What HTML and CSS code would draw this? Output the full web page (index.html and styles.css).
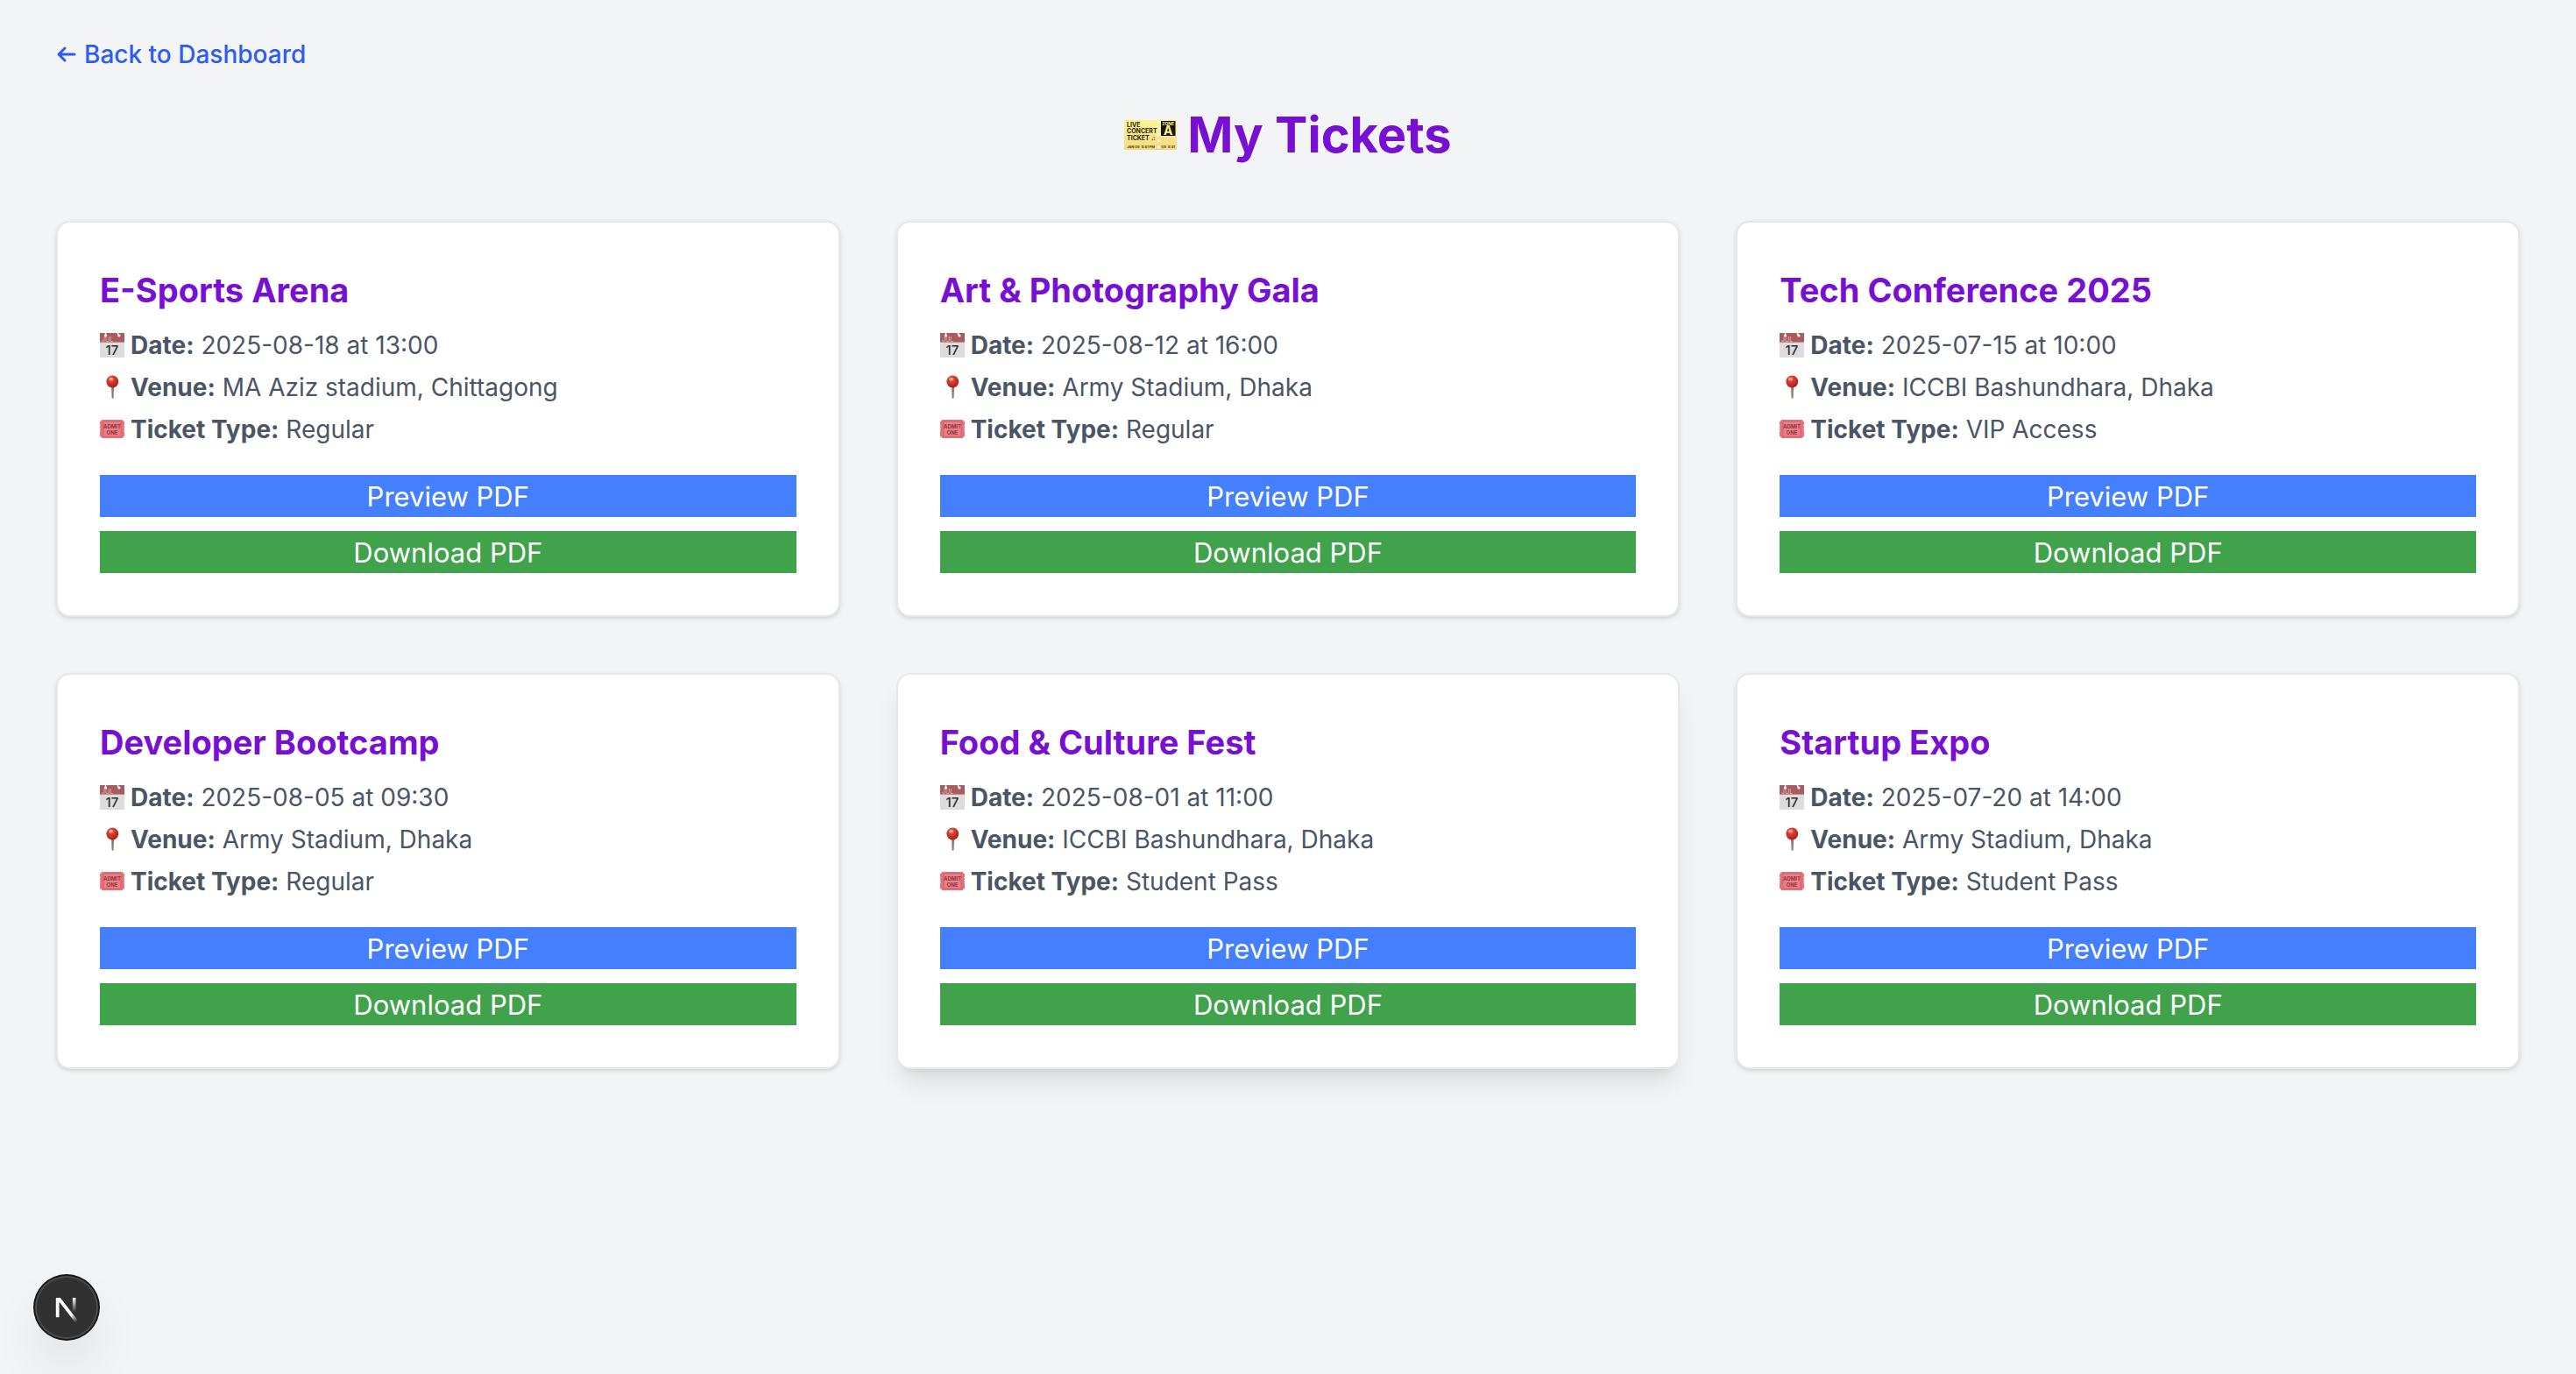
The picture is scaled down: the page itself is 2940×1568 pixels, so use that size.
FILE: index.html
```html
<!DOCTYPE html>
<html lang="en">
<head>
<meta charset="utf-8">
<meta name="viewport" content="width=device-width, initial-scale=1">
<title>My Tickets</title>
<link rel="stylesheet" href="styles.css">
</head>
<body>
<svg class="gradients" aria-hidden="true">
  <defs>
    <linearGradient id="pin-stem" x1="0" x2="1" y1="0" y2="0"><stop offset="0" stop-color="#a8927f"/><stop offset="1" stop-color="#6f6660"/></linearGradient>
    <radialGradient id="pin-head" cx=".4" cy=".3" r=".7"><stop offset="0" stop-color="#f58a78"/><stop offset=".35" stop-color="#d8402f"/><stop offset="1" stop-color="#a81f17"/></radialGradient>
    <linearGradient id="paper" x1="0" x2="0" y1="0" y2="1"><stop offset="0" stop-color="#fdf68f"/><stop offset="1" stop-color="#f3d982"/></linearGradient>
  </defs>
</svg>
<svg class="sprite" aria-hidden="true">
  <symbol id="calendar" viewBox="0 0 28 28">
    <rect width="28" height="28" fill="#dcdcdc"/>
    <rect width="28" height="11" fill="#a95c5e"/>
    <rect y="10" width="28" height="1" fill="#c38d8e"/>
    <circle cx="6.500" cy="3" r="1.600" fill="#fff"/><path d="M6.500 0V3M20 0l2 3" stroke="#fff" stroke-width="1.400"/>
    <circle cx="22" cy="3" r="1.600" fill="#fff"/>
    <text x="2" y="9.500" class="cal-month">JUL</text>
    <text x="14" y="25" class="cal-day">17</text>
  </symbol>
  <symbol id="pin" viewBox="0 0 28 28">
    <path d="M13 13h3l-.5 13-1 1-1-1z" fill="url(#pin-stem)"/>
    <circle cx="14.300" cy="7.500" r="6.900" fill="url(#pin-head)"/>
    <ellipse cx="12.500" cy="4.500" rx="2.500" ry="1.500" fill="#fbb6a8" opacity=".7"/>
  </symbol>
  <symbol id="admit" viewBox="0 0 28 28">
    <path d="M2 3h24q0 2 2 2v3.500q-1.200 1 0 2v1q-1.200 1 0 2v1q-1.200 1 0 2V22q-2 0-2 2H2q0-2-2-2v-5.500q1.200-1 0-2v-1q1.200-1 0-2v-1q1.200-1 0-2V5q2 0 2-2z" fill="#e8707a"/>
    <rect x="4" y="5" width="20" height="17" fill="#ec8087" stroke="#c95762" stroke-width=".7"/>
    <text x="14" y="12.800" class="admit-text">ADMIT</text>
    <text x="14" y="19.500" class="admit-text">ONE</text>
  </symbol>
</svg>

<main class="page">
  <nav class="nav"><a class="back" href="#"><svg class="arrow" viewBox="0 0 24 20" aria-hidden="true"><path d="M21 10H3M10 3l-7 7 7 7"/></svg>Back to Dashboard</a></nav>

  <h1 class="heading">
    <svg class="heading-icon" viewBox="0 0 60 34" aria-hidden="true">
      <rect width="60" height="34" fill="url(#paper)"/>
      <path d="M39.500 1v32" stroke="#f3f4f6" stroke-width="3" stroke-dasharray="3 4"/>
      <rect x="42" y="1" width="16.500" height="17" fill="#18160c"/>
      <text x="3" y="7.500" class="concert">LIVE</text>
      <text x="3" y="15" class="concert">CONCERT</text>
      <text x="3" y="22.700" class="concert">TICKET ♫</text>
      <text x="3" y="31.500" class="fine">JAN 09&#160; 9:41 PM</text>
      <text x="42" y="31.500" class="fine">1/9&#160; 9:41</text>
      <text x="50.200" y="6" class="zone">ZONE</text>
      <text x="50.200" y="17" class="zone-letter">A</text>
    </svg>
    My Tickets
  </h1>

  <section class="grid">
    <article class="card">
      <h2 class="title">E-Sports Arena</h2>
      <div class="details">
        <p class="row"><svg class="icon" aria-hidden="true"><use href="#calendar"/></svg><span><strong>Date:</strong> 2025-08-18 at 13:00</span></p>
        <p class="row"><svg class="icon" aria-hidden="true"><use href="#pin"/></svg><span><strong>Venue:</strong> MA Aziz stadium, Chittagong</span></p>
        <p class="row"><svg class="icon" aria-hidden="true"><use href="#admit"/></svg><span><strong>Ticket Type:</strong> Regular</span></p>
      </div>
      <div class="actions"><button class="btn preview" type="button">Preview PDF</button><button class="btn download" type="button">Download PDF</button></div>
    </article>
    <article class="card">
      <h2 class="title">Art &amp; Photography Gala</h2>
      <div class="details">
        <p class="row"><svg class="icon" aria-hidden="true"><use href="#calendar"/></svg><span><strong>Date:</strong> 2025-08-12 at 16:00</span></p>
        <p class="row"><svg class="icon" aria-hidden="true"><use href="#pin"/></svg><span><strong>Venue:</strong> Army Stadium, Dhaka</span></p>
        <p class="row"><svg class="icon" aria-hidden="true"><use href="#admit"/></svg><span><strong>Ticket Type:</strong> Regular</span></p>
      </div>
      <div class="actions"><button class="btn preview" type="button">Preview PDF</button><button class="btn download" type="button">Download PDF</button></div>
    </article>
    <article class="card">
      <h2 class="title">Tech Conference 2025</h2>
      <div class="details">
        <p class="row"><svg class="icon" aria-hidden="true"><use href="#calendar"/></svg><span><strong>Date:</strong> 2025-07-15 at 10:00</span></p>
        <p class="row"><svg class="icon" aria-hidden="true"><use href="#pin"/></svg><span><strong>Venue:</strong> ICCBI Bashundhara, Dhaka</span></p>
        <p class="row"><svg class="icon" aria-hidden="true"><use href="#admit"/></svg><span><strong>Ticket Type:</strong> VIP Access</span></p>
      </div>
      <div class="actions"><button class="btn preview" type="button">Preview PDF</button><button class="btn download" type="button">Download PDF</button></div>
    </article>
    <article class="card">
      <h2 class="title">Developer Bootcamp</h2>
      <div class="details">
        <p class="row"><svg class="icon" aria-hidden="true"><use href="#calendar"/></svg><span><strong>Date:</strong> 2025-08-05 at 09:30</span></p>
        <p class="row"><svg class="icon" aria-hidden="true"><use href="#pin"/></svg><span><strong>Venue:</strong> Army Stadium, Dhaka</span></p>
        <p class="row"><svg class="icon" aria-hidden="true"><use href="#admit"/></svg><span><strong>Ticket Type:</strong> Regular</span></p>
      </div>
      <div class="actions"><button class="btn preview" type="button">Preview PDF</button><button class="btn download" type="button">Download PDF</button></div>
    </article>
    <article class="card raised">
      <h2 class="title">Food &amp; Culture Fest</h2>
      <div class="details">
        <p class="row"><svg class="icon" aria-hidden="true"><use href="#calendar"/></svg><span><strong>Date:</strong> 2025-08-01 at 11:00</span></p>
        <p class="row"><svg class="icon" aria-hidden="true"><use href="#pin"/></svg><span><strong>Venue:</strong> ICCBI Bashundhara, Dhaka</span></p>
        <p class="row"><svg class="icon" aria-hidden="true"><use href="#admit"/></svg><span><strong>Ticket Type:</strong> Student Pass</span></p>
      </div>
      <div class="actions"><button class="btn preview" type="button">Preview PDF</button><button class="btn download" type="button">Download PDF</button></div>
    </article>
    <article class="card">
      <h2 class="title">Startup Expo</h2>
      <div class="details">
        <p class="row"><svg class="icon" aria-hidden="true"><use href="#calendar"/></svg><span><strong>Date:</strong> 2025-07-20 at 14:00</span></p>
        <p class="row"><svg class="icon" aria-hidden="true"><use href="#pin"/></svg><span><strong>Venue:</strong> Army Stadium, Dhaka</span></p>
        <p class="row"><svg class="icon" aria-hidden="true"><use href="#admit"/></svg><span><strong>Ticket Type:</strong> Student Pass</span></p>
      </div>
      <div class="actions"><button class="btn preview" type="button">Preview PDF</button><button class="btn download" type="button">Download PDF</button></div>
    </article>
  </section>
</main>

<button class="dev-badge" type="button" aria-label="Open Next.js Dev Tools">
  <svg class="dev-logo" viewBox="0 0 32 40" fill="none" aria-hidden="true">
    <defs>
      <linearGradient id="n-diag" x1="9.956" y1="11.123" x2="15.478" y2="17.967" gradientUnits="userSpaceOnUse"><stop stop-color="#fff"/><stop offset=".604" stop-color="#fff" stop-opacity="0"/></linearGradient>
      <linearGradient id="n-stem" x1="11.822" y1="1.400" x2="11.791" y2="9.625" gradientUnits="userSpaceOnUse"><stop stop-color="#fff"/><stop offset="1" stop-color="#fff" stop-opacity="0"/></linearGradient>
      <mask id="n-mask" maskUnits="userSpaceOnUse" x="0" y="0" width="20" height="20"><rect width="20" height="20" fill="#fff"/><rect width="5" height="1.500" fill="#000"/></mask>
    </defs>
    <g transform="translate(8.500 13)" stroke-width="1.860">
      <path d="M13.300 15.200 2.340 1v11.600" stroke="url(#n-diag)" mask="url(#n-mask)"/>
      <path d="M11.825 1.500v11.600" stroke="url(#n-stem)"/>
    </g>
  </svg>
</button>
</body>
</html>
```
FILE: styles.css
```css
* { box-sizing: border-box; margin: 0; padding: 0; }

body {
  min-height: 100vh;
  background: #f3f4f6;
  font-family: Inter, "Liberation Sans", sans-serif;
  font-size: 31px;
  line-height: 48px;
}

.gradients { position: absolute; width: 0; height: 0; }
.sprite { display: none; }

.page { padding: 40px 64px 64px; }

.nav { display: flex; }
.back {
  display: flex;
  align-items: center;
  gap: 8px;
  color: #2c5cf6;
  font-size: 28px;
  font-weight: 500;
  line-height: 44px;
  text-decoration: none;
}
.arrow { width: 24px; height: 20px; fill: none; stroke: currentColor; stroke-width: 3; stroke-linecap: round; stroke-linejoin: round; }

.heading {
  display: flex;
  justify-content: center;
  align-items: center;
  gap: 12px;
  margin: 32px 0 60px;
  color: #7710d3;
  font-size: 56px;
  font-weight: 700;
  line-height: 76px;
}
.heading-icon { width: 60px; height: 34px; }

.concert { font-size: 7px; font-weight: 700; fill: #2a260f; }
.fine { font-size: 4px; font-weight: 700; fill: #4a4218; }
.zone { font-size: 5px; font-weight: 700; fill: #fbf08d; text-anchor: middle; }
.zone-letter { font-size: 14px; font-weight: 700; fill: #fbf08d; text-anchor: middle; }
.cal-month { font-size: 7px; font-weight: 500; fill: #d9b0b0; }
.cal-day { font-size: 15px; font-weight: 500; fill: #2e2e2e; text-anchor: middle; }
.admit-text { font-size: 6px; font-weight: 700; fill: #8c3640; text-anchor: middle; }

.grid {
  display: grid;
  grid-template-columns: repeat(3, 1fr);
  gap: 64px;
}

.card {
  padding: 48px;
  background: #fff;
  border: 2px solid #e5e7eb;
  border-radius: 16px;
  box-shadow: 0 2px 6px rgba(0, 0, 0, .1), 0 2px 4px -2px rgba(0, 0, 0, .1);
}
.raised { box-shadow: 0 20px 30px -6px rgba(0, 0, 0, .1), 0 8px 12px -8px rgba(0, 0, 0, .1); }

.title {
  margin-bottom: 14px;
  color: #7710d3;
  font-size: 38px;
  font-weight: 700;
  line-height: 58px;
}

.details { display: grid; gap: 8px; margin-bottom: 32px; }
.row {
  display: flex;
  align-items: center;
  gap: 7px;
  color: #4a5565;
  font-size: 28px;
  line-height: 40px;
}
.row strong { font-weight: 700; }
.icon { width: 28px; height: 28px; flex: none; }

.actions { display: grid; gap: 16px; }
.btn {
  padding-top: 2px;
  border: 0;
  color: #fff;
  font: inherit;
  line-height: 46px;
  cursor: pointer;
}
.preview { background: #447ffd; }
.download { background: #40a34b; }

.dev-badge {
  position: fixed;
  left: 40px;
  bottom: 40px;
  display: flex;
  justify-content: center;
  align-items: center;
  width: 72px;
  height: 72px;
  border: 0;
  border-radius: 50%;
  background: #303030;
  box-shadow: 0 0 0 2px #171717, inset 0 0 0 2px #4a4a4a, 0 32px 64px -16px rgba(0, 0, 0, .24);
}
.dev-logo { width: 64px; height: 80px; flex: none; }
```
